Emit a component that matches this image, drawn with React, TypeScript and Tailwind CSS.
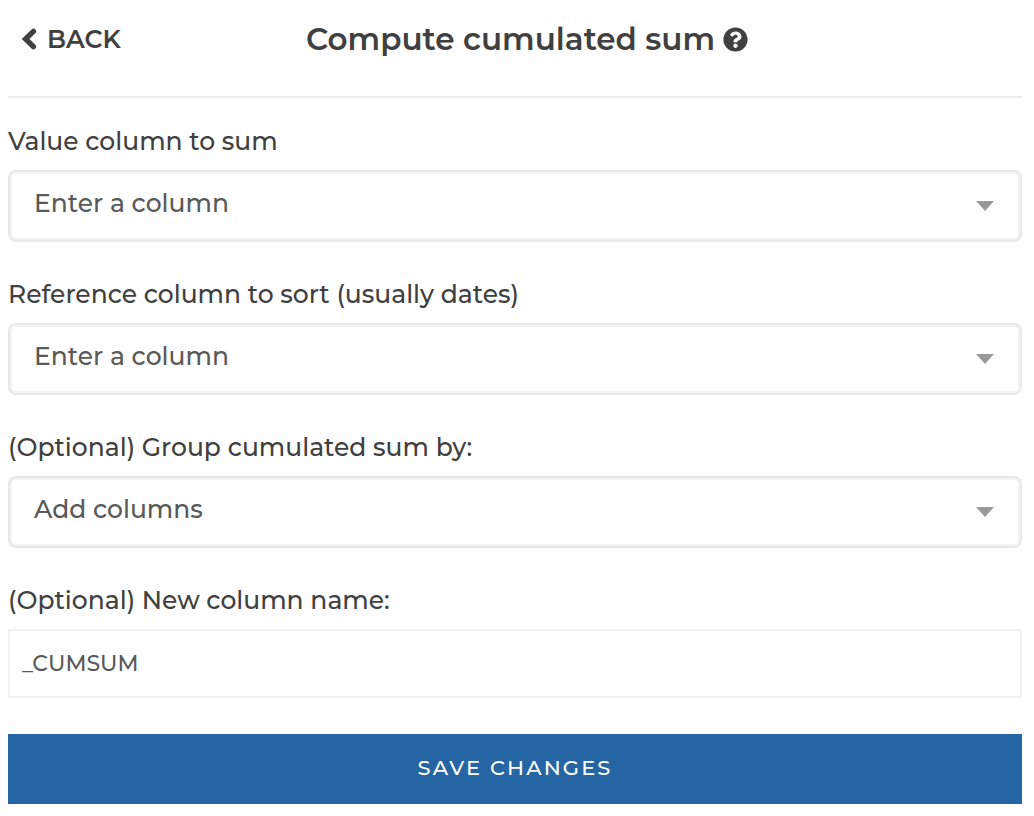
import { FaQuestionCircle } from 'react-icons/fa';

const selects = [
  { id: 'value', label: 'Value column to sum', placeholder: 'Enter a column' },
  { id: 'reference', label: 'Reference column to sort (usually dates)', placeholder: 'Enter a column' },
  { id: 'group', label: '(Optional) Group cumulated sum by:', placeholder: 'Add columns' },
];

const labelClass = 'text-[25px] leading-[33px] font-medium text-[#404040]';

export default function App() {
  return (
    <main className="bg-white pl-2 pr-3 pb-3 font-['Montserrat','Inter',sans-serif] text-[#404040]">
      <header className="grid grid-cols-[1fr_auto_1fr] items-center border-b-2 border-[#ececec] pt-[19px] pb-[37px]">
        <button type="button" className="flex items-center gap-[10px] justify-self-start pl-[14px] text-[25px] leading-10 font-semibold">
          <svg viewBox="0 0 15 22" className="h-[22px] w-[15px] fill-none stroke-current" aria-hidden="true">
            <path d="M11.4 3.4L3.6 11L11.4 18.6" strokeWidth="5.4" strokeLinecap="round" strokeLinejoin="miter" />
          </svg>
          BACK
        </button>
        <h1 className="flex items-center gap-2 pl-6 text-[31px] leading-10 font-semibold">
          Compute cumulated sum
          <FaQuestionCircle className="size-[25px]" aria-hidden="true" />
        </h1>
      </header>
      <form className="flex flex-col gap-9 pt-[27px]" onSubmit={(e) => e.preventDefault()}>
        {selects.map((s) => (
          <div key={s.id} className="flex flex-col gap-3">
            <label htmlFor={s.id} className={labelClass}>
              {s.label}
            </label>
            <div className="grid items-center">
              <select
                id={s.id}
                className="col-start-1 row-start-1 h-[72px] w-full appearance-none rounded-lg border-2 border-[#e8e8e8] bg-white pr-16 pb-1 pl-6 text-[25px] font-medium text-[#595959] shadow-[inset_0_0_0_2px_#f3f3f3]"
              >
                <option>{s.placeholder}</option>
              </select>
              <svg
                viewBox="0 0 18 10"
                className="pointer-events-none col-start-1 row-start-1 mr-7 h-[10px] w-[18px] justify-self-end fill-[#999999]"
                aria-hidden="true"
              >
                <path d="M0 0H18L9 10Z" />
              </svg>
            </div>
          </div>
        ))}
        <div className="flex flex-col gap-3">
          <label htmlFor="name" className={labelClass}>
            (Optional) New column name:
          </label>
          <input
            id="name"
            type="text"
            defaultValue="_CUMSUM"
            className="h-[69px] w-full border-2 border-[#f2f2f2] bg-white px-3 text-[22px] font-medium text-[#595959]"
          />
        </div>
        <button type="submit" className="h-[70px] bg-[#2665a3] pb-[2px] text-[21px] font-medium tracking-widest text-white">
          SAVE CHANGES
        </button>
      </form>
    </main>
  );
}
